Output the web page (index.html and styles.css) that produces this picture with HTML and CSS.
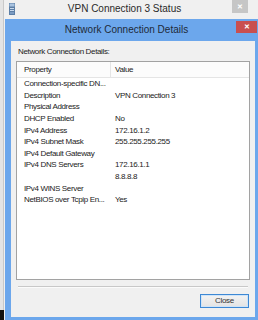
FILE: index.html
```html
<!DOCTYPE html>
<html>
<head>
<meta charset="utf-8">
<link rel="stylesheet" href="styles.css">
</head>
<body>
<div class="desk">
  <div class="outer-title">
    <svg class="app-icon" width="6" height="12" viewBox="0 0 6 12">
      <rect x="0" y="0" width="6" height="12" fill="#5d7fa6"/>
      <rect x="0.5" y="0.5" width="5" height="3" fill="#a9c3e0"/>
      <rect x="1" y="5" width="4" height="1" fill="#c9d9ec"/>
      <rect x="1" y="7" width="4" height="1" fill="#c9d9ec"/>
      <rect x="1" y="9" width="4" height="2" fill="#7c9cc2"/>
    </svg>
    <div class="outer-text">VPN Connection 3 Status</div>
    <div class="outer-close">✕</div>
  </div>
  <div class="dialog">
    <div class="dlg-title">
      <div class="dlg-text">Network Connection Details</div>
      <div class="dlg-close">✕</div>
    </div>
    <div class="dlg-body">
      <div class="lbl">Network Connection Details:</div>
      <div class="list">
        <div class="row head"><div class="c1">Property</div><div class="c2">Value</div></div>
        <div class="row"><div class="c1">Connection-specific DN...</div><div class="c2"></div></div>
        <div class="row"><div class="c1">Description</div><div class="c2">VPN Connection 3</div></div>
        <div class="row"><div class="c1">Physical Address</div><div class="c2"></div></div>
        <div class="row"><div class="c1">DHCP Enabled</div><div class="c2">No</div></div>
        <div class="row"><div class="c1">IPv4 Address</div><div class="c2">172.16.1.2</div></div>
        <div class="row"><div class="c1">IPv4 Subnet Mask</div><div class="c2">255.255.255.255</div></div>
        <div class="row"><div class="c1">IPv4 Default Gateway</div><div class="c2"></div></div>
        <div class="row"><div class="c1">IPv4 DNS Servers</div><div class="c2">172.16.1.1</div></div>
        <div class="row"><div class="c1"></div><div class="c2">8.8.8.8</div></div>
        <div class="row"><div class="c1">IPv4 WINS Server</div><div class="c2"></div></div>
        <div class="row"><div class="c1">NetBIOS over Tcpip En...</div><div class="c2">Yes</div></div>
      </div>
      <div class="sep"></div>
      <div class="actions"><button class="btn">Close</button></div>
    </div>
  </div>
</div>
</body>
</html>
```
FILE: styles.css
```css
html, body {
  margin: 0;
  padding: 0;
}
body {
  width: 258px;
  height: 320px;
  overflow: hidden;
  font-family: "Liberation Sans", Arial, sans-serif;
}
.desk {
  width: 258px;
  height: 320px;
  display: flex;
  flex-direction: column;
  background:
    linear-gradient(#111, #111) left bottom / 4px 10px no-repeat,
    linear-gradient(to right, #e4e4e4 0 3px, #c9c9c9 3px 4px, #f0f0f0 4px);
}
.outer-title {
  height: 19px;
  display: flex;
  align-items: flex-start;
  flex-shrink: 0;
}
.app-icon {
  margin: 3px 0 0 9px;
  flex-shrink: 0;
}
.outer-text {
  flex: 1;
  text-align: center;
  font-size: 10px;
  line-height: 10px;
  padding-top: 4px;
  color: #2a2a2a;
  margin-left: 2px;
}
.outer-close {
  width: 16px;
  height: 13px;
  margin-right: 10px;
  background: #c6c6c6;
  color: #fff;
  font-size: 7px;
  line-height: 13px;
  text-align: center;
  font-weight: bold;
}
.dialog {
  margin-left: 5px;
  width: 244px;
  flex: 1;
  display: flex;
  flex-direction: column;
  border-left: 6px solid #6ca7ec;
  border-right: 6px solid #6ca7ec;
  border-bottom: 3px solid #6ca7ec;
  background: #6ca7ec;
}
.dlg-title {
  height: 22px;
  display: flex;
  align-items: flex-start;
  flex-shrink: 0;
}
.dlg-text {
  flex: 1;
  text-align: center;
  font-size: 10px;
  line-height: 10px;
  padding-top: 6px;
  color: #1e2a38;
  padding-left: 6px;
}
.dlg-close {
  width: 21px;
  height: 12px;
  margin-top: 2px;
  margin-right: -2px;
  background: #c94f4f;
  color: #fff;
  font-size: 7px;
  line-height: 12px;
  text-align: center;
  font-weight: bold;
}
.dlg-body {
  flex: 1;
  background: #f0f0f0;
  display: flex;
  flex-direction: column;
  padding: 6px 5px 9px 5px;
  font-size: 8px;
  letter-spacing: -0.35px;
  color: #222;
}
.lbl {
  height: 10px;
  line-height: 10px;
  padding-left: 2px;
  margin-bottom: 4px;
}
.list {
  height: 217px;
  background: #fff;
  border: 1px solid #a2a2a2;
  flex-shrink: 0;
}
.row {
  display: grid;
  grid-template-columns: 94px 1fr;
  height: 11.65px;
  line-height: 11.65px;
  white-space: nowrap;
}
.row .c1 {
  padding-left: 7px;
}
.row .c2 {
  padding-left: 4px;
}
.row.head {
  height: 15px;
  line-height: 15px;
  background: #fcfcfc;
  border-bottom: 1px solid #e5e5e5;
}
.row.head .c1 {
  border-right: 1px solid #e5e5e5;
}
.sep {
  margin: 6px 2px 0 2px;
  height: 1px;
  background: #c8c8c8;
  border-bottom: 1px solid #fbfbfb;
}
.actions {
  display: flex;
  justify-content: flex-end;
  margin-top: 6px;
  padding-right: 1px;
}
.btn {
  width: 49px;
  height: 14px;
  padding: 0;
  margin: 0;
  border: 1px solid #3d88d4;
  background: linear-gradient(#f3f3f3, #e3e3e3);
  font-family: "Liberation Sans", Arial, sans-serif;
  font-size: 8px;
  letter-spacing: -0.3px;
  color: #333;
  line-height: 12px;
  box-shadow: inset 0 0 0 1px #cfe4f8;
}
```
